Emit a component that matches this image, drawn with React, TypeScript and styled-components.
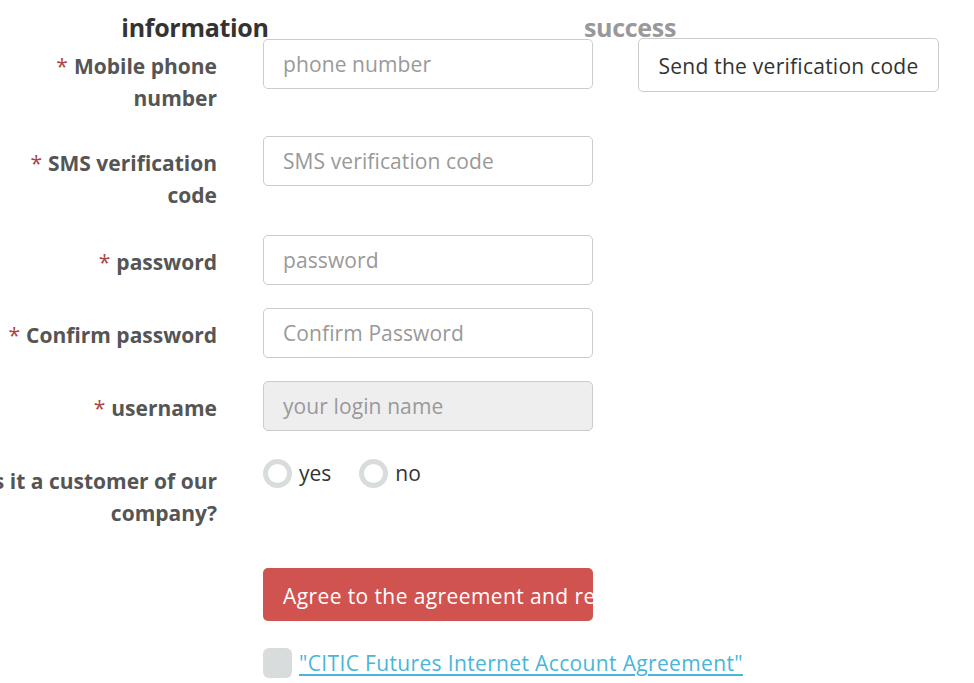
import React from "react";
import styled, { createGlobalStyle } from "styled-components";

const Global = createGlobalStyle`
  html, body { margin: 0; padding: 0; background: #fff; }
  body { font-family: "Open Sans", "Noto Sans", sans-serif; color: #333; overflow: hidden; }
  * { box-sizing: border-box; }
`;

const Page = styled.div`
  width: 974px;
  height: 683px;
  overflow: hidden;
  position: relative;
`;

const Steps = styled.div`
  display: flex;
  height: 39px;
  align-items: flex-start;
`;

const Step = styled.div<{ $active?: boolean; $left: number; $width: number }>`
  margin-left: ${(p) => p.$left}px;
  width: ${(p) => p.$width}px;
  text-align: center;
  font-size: 25px;
  font-weight: 700;
  line-height: 30px;
  padding-top: 12px;
  color: ${(p) => (p.$active ? "#333" : "#999")};
  white-space: nowrap;
  letter-spacing: -0.3px;
`;

const Form = styled.form`
  display: flex;
  flex-direction: column;
  margin-left: -43px;
`;

const Row = styled.div<{ $mb?: number }>`
  display: flex;
  align-items: flex-start;
  margin-bottom: ${(p) => (p.$mb ?? 23)}px;
`;

const Label = styled.label`
  flex: 0 0 260px;
  text-align: right;
  font-size: 21px;
  font-weight: 700;
  line-height: 32px;
  color: #555;
  padding-top: 11px;
  letter-spacing: 0px;
`;

const Star = styled.span`
  color: #a94442;
  font-weight: 400;
  margin-right: 6px;
`;

const Field = styled.div`
  flex: 0 0 330px;
  margin-left: 46px;
`;

const Input = styled.input<{ $disabled?: boolean }>`
  display: block;
  width: 330px;
  height: 50px;
  padding: 0 19px;
  border: 1px solid #ccc;
  border-radius: 5px;
  font-family: inherit;
  font-size: 21px;
  color: #555;
  background: ${(p) => (p.$disabled ? "#eee" : "#fff")};
  outline: none;
  letter-spacing: 0.1px;
  &::placeholder { color: #999; }
`;

const SendButton = styled.button`
  margin-left: 45px;
  margin-top: -1px;
  width: 301px;
  height: 54px;
  border: 1px solid #ccc;
  border-radius: 5px;
  background: #fff;
  font-family: inherit;
  font-size: 21px;
  color: #333;
  padding: 2px 10px 0;
  white-space: nowrap;
  letter-spacing: 0.25px;
`;

const Radios = styled.div`
  display: flex;
  align-items: center;
  gap: 28px;
  padding-top: 3px;
`;

const RadioItem = styled.label`
  display: flex;
  align-items: center;
  gap: 7px;
  font-size: 21px;
  color: #333;
  line-height: 30px;
`;

const RadioCircle = styled.span`
  width: 29px;
  height: 29px;
  border-radius: 50%;
  border: 5px solid #d8dcdd;
  background: #fff;
  margin-top: 2px;
`;

const SubmitButton = styled.button`
  display: block;
  width: 330px;
  height: 53px;
  border: none;
  border-radius: 5px;
  background: #d1534f;
  color: #fff;
  font-family: inherit;
  font-size: 21px;
  text-align: left;
  padding: 2px 20px 0;
  white-space: nowrap;
  overflow: hidden;
  letter-spacing: 0.4px;
`;

const AgreeRow = styled.div`
  display: flex;
  align-items: center;
  gap: 7px;
`;

const CheckBox = styled.span`
  width: 29px;
  height: 30px;
  border-radius: 6px;
  background: #d9dcdd;
  flex: 0 0 auto;
`;

const AgreeLink = styled.a`
  font-size: 21px;
  color: #49b6d9;
  text-decoration: underline;
  text-underline-offset: 3px;
  white-space: nowrap;
  letter-spacing: 0.35px;
`;

const Spacer = styled.div`
  flex: 0 0 260px;
`;

export default function App() {
  return (
    <Page>
      <Global />
      <Steps>
        <Step $active $left={114} $width={162}>information</Step>
        <Step $left={299} $width={110}>success</Step>
      </Steps>
      <Form onSubmit={(e) => e.preventDefault()}>
        <Row $mb={22}>
          <Label>
            <Star>*</Star>Mobile phone
            <br />
            number
          </Label>
          <Field>
            <Input placeholder="phone number" />
          </Field>
          <SendButton type="button">Send the verification code</SendButton>
        </Row>
        <Row $mb={24}>
          <Label>
            <Star>*</Star>SMS verification
            <br />
            code
          </Label>
          <Field>
            <Input placeholder="SMS verification code" />
          </Field>
        </Row>
        <Row>
          <Label>
            <Star>*</Star>password
          </Label>
          <Field>
            <Input type="password" placeholder="password" />
          </Field>
        </Row>
        <Row>
          <Label>
            <Star>*</Star>Confirm password
          </Label>
          <Field>
            <Input type="password" placeholder="Confirm Password" />
          </Field>
        </Row>
        <Row>
          <Label>
            <Star>*</Star>username
          </Label>
          <Field>
            <Input $disabled readOnly placeholder="your login name" />
          </Field>
        </Row>
        <Row $mb={39}>
          <Label>
            Is it a customer of our
            <br />
            company?
          </Label>
          <Field>
            <Radios>
              <RadioItem>
                <RadioCircle />
                yes
              </RadioItem>
              <RadioItem>
                <RadioCircle />
                no
              </RadioItem>
            </Radios>
          </Field>
        </Row>
        <Row $mb={27}>
          <Spacer />
          <Field>
            <SubmitButton type="submit">Agree to the agreement and register</SubmitButton>
          </Field>
        </Row>
        <Row>
          <Spacer />
          <Field>
            <AgreeRow>
              <CheckBox />
              <AgreeLink href="#">"CITIC Futures Internet Account Agreement"</AgreeLink>
            </AgreeRow>
          </Field>
        </Row>
      </Form>
    </Page>
  );
}
